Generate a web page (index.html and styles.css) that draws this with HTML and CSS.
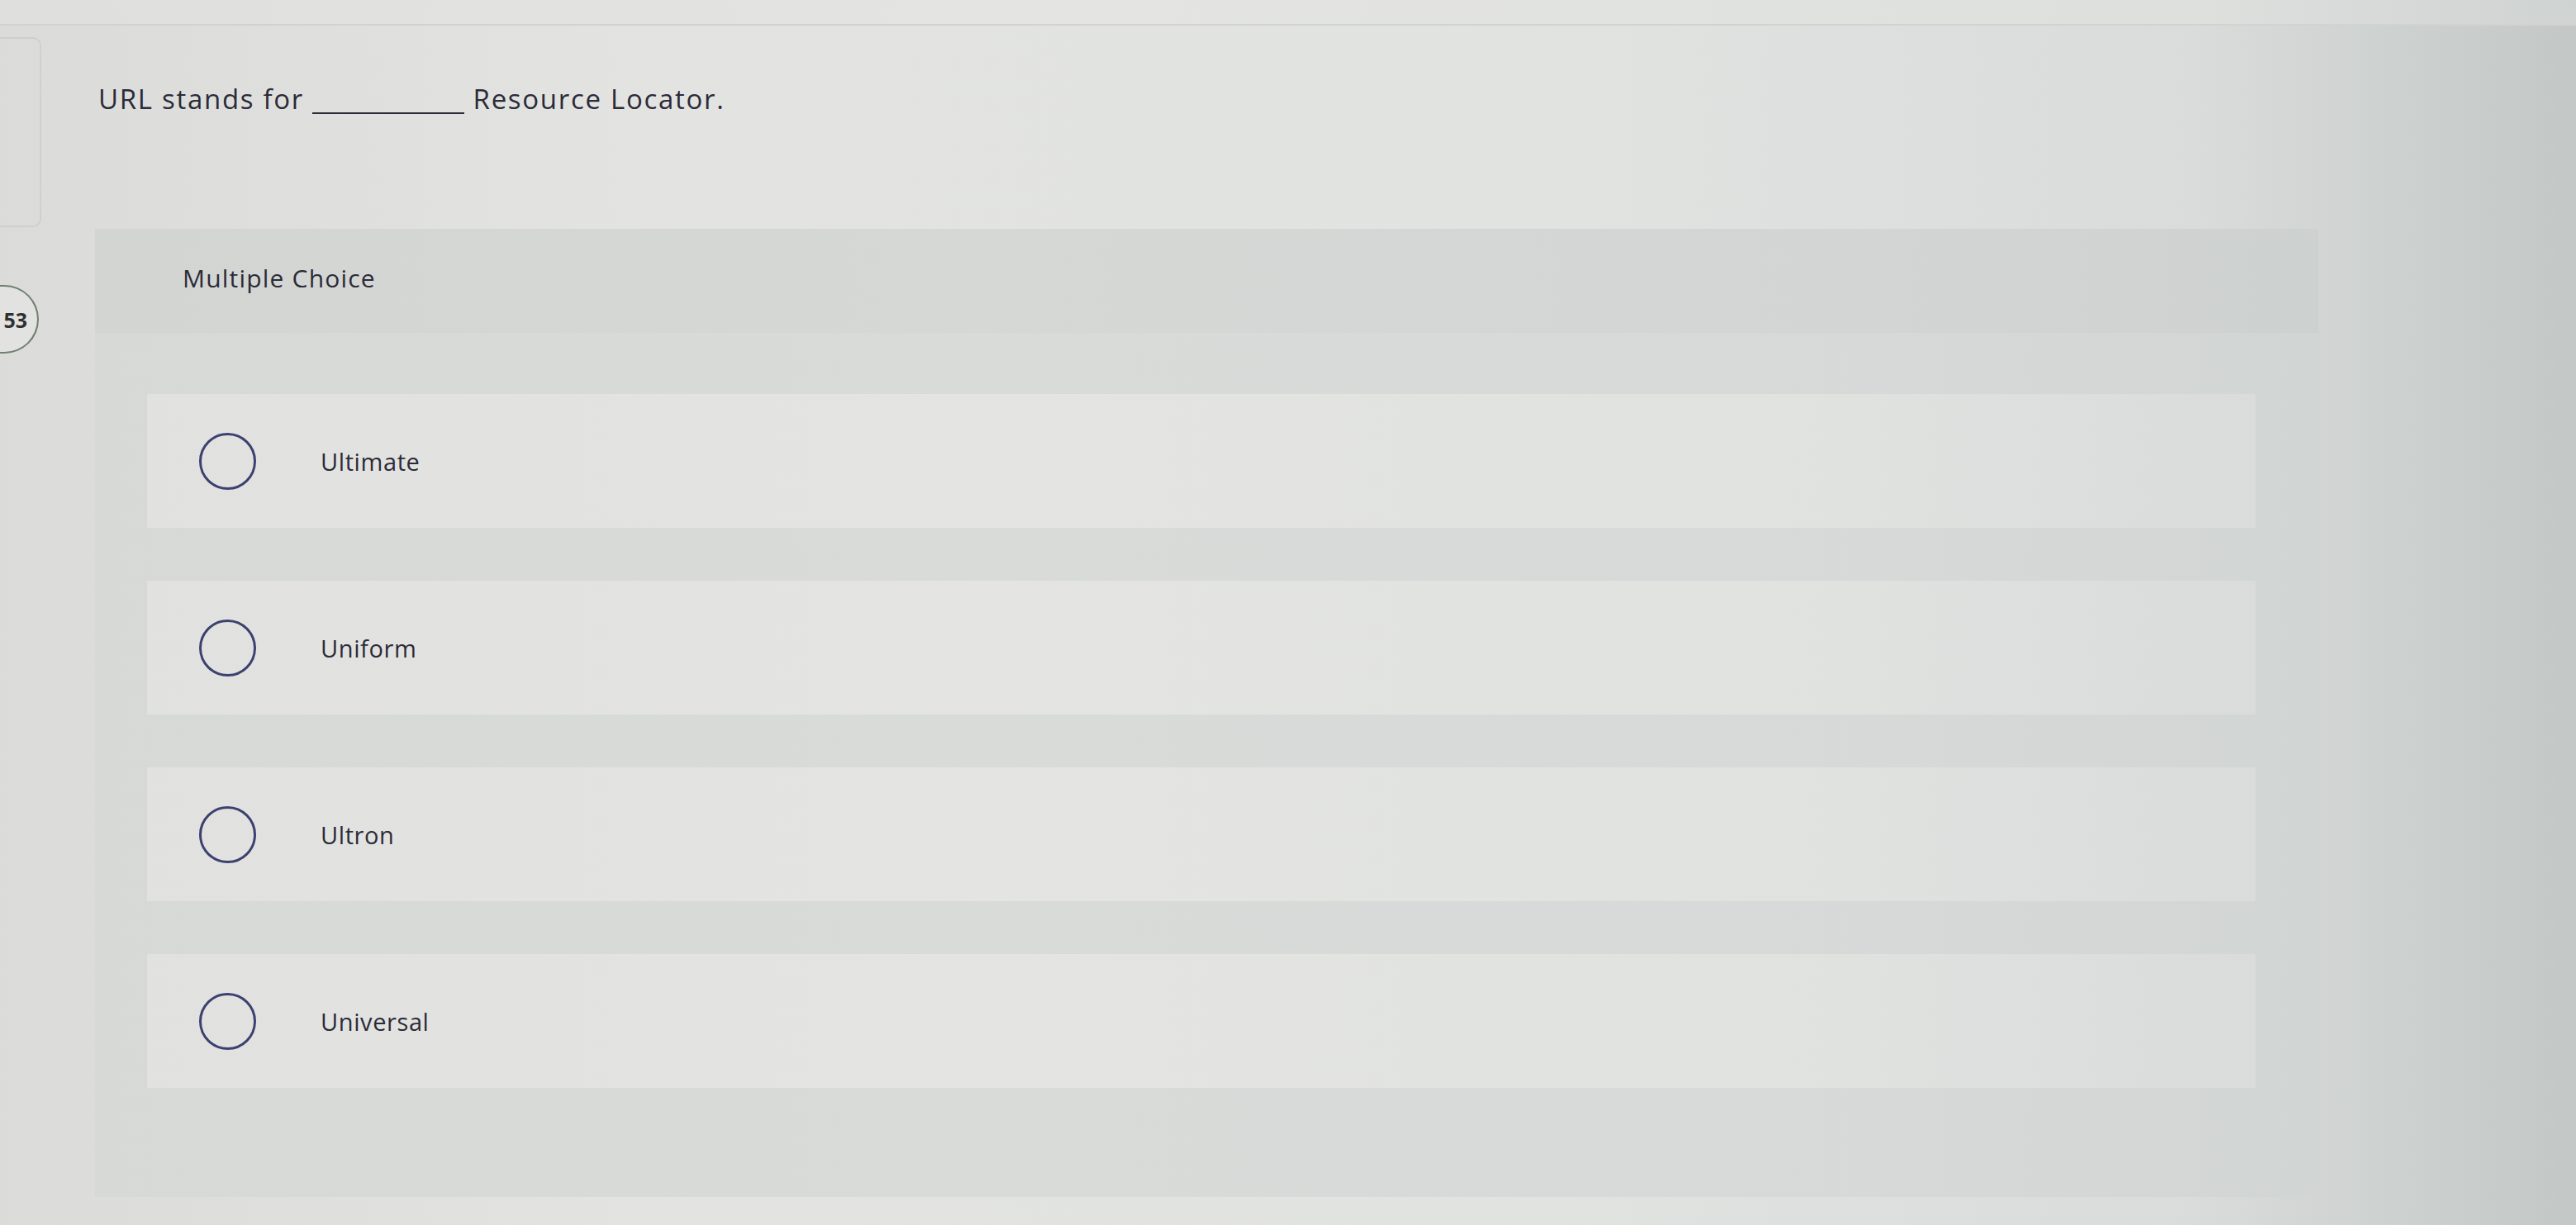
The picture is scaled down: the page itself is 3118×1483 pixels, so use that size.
FILE: index.html
```html
<!DOCTYPE html>
<html lang="en">
<head>
<meta charset="utf-8">
<title>URL question</title>
<link rel="stylesheet" href="styles.css">
</head>
<body>
<div class="topbar"></div>
<div class="main">
  <aside class="gutter">
    <div class="prev-card"></div>
    <div class="qnum">53</div>
  </aside>
  <section class="content">
    <p class="question">URL stands for <span class="blank"></span> Resource Locator.</p>
    <div class="panel">
      <div class="panel-head">Multiple Choice</div>
      <div class="options">
        <label class="option"><span class="radio"></span><span class="opt-text">Ultimate</span></label>
        <label class="option"><span class="radio"></span><span class="opt-text">Uniform</span></label>
        <label class="option"><span class="radio"></span><span class="opt-text">Ultron</span></label>
        <label class="option"><span class="radio"></span><span class="opt-text">Universal</span></label>
      </div>
    </div>
  </section>
</div>
</body>
</html>
```
FILE: styles.css
```css
html, body {
  margin: 0;
  padding: 0;
}
body {
  width: 3118px;
  height: 1483px;
  overflow: hidden;
  font-family: "Open Sans", "Liberation Sans", sans-serif;
  color: #2c2b38;
  background: linear-gradient(to right, #dbdcda 0%, #e3e4e2 25%, #e1e3e1 60%, #d9dcdb 85%, #cdd1d0 93%, #c3c7c6 100%);
}
.topbar {
  height: 29px;
  border-bottom: 2px solid #d2d3d1;
  background: linear-gradient(to right, #dfe0de 0%, #e4e5e3 40%, #dee0de 85%, #cfd3d2 100%);
}
.main {
  display: flex;
}
.gutter {
  width: 115px;
  flex: none;
  display: flex;
  flex-direction: column;
  padding-top: 14px;
}
.prev-card {
  width: 62px;
  height: 230px;
  margin-left: -12px;
  border: 2px solid #cfd0ce;
  border-radius: 0 10px 10px 0;
  box-sizing: border-box;
}
.qnum {
  margin-top: 70px;
  width: 47px;
  height: 83px;
  box-sizing: border-box;
  border: 2px solid #6f806f;
  border-left: none;
  border-radius: 0 42px 42px 0;
  display: flex;
  align-items: center;
  justify-content: flex-end;
  padding-right: 12px;
  font-size: 25px;
  font-weight: 700;
  color: #2f3130;
  background: #e2e3e1;
}
.content {
  flex: 1;
}
.question {
  margin: 0;
  padding: 68px 0 0 4px;
  font-size: 33px;
  line-height: 42px;
  letter-spacing: 1.7px;
}
.blank {
  display: inline-block;
  width: 184px;
  height: 1px;
  border-bottom: 2px solid #2c2b38;
  vertical-align: -6px;
}
.panel {
  margin-top: 136px;
  width: 2691px;
  height: 1172px;
  background: linear-gradient(to right, #d7d9d7 0%, #d9dbd9 40%, #d6d9d8 80%, #d1d5d4 100%);
}
.panel-head {
  height: 126px;
  display: flex;
  align-items: center;
  padding-left: 106px;
  padding-bottom: 8px;
  box-sizing: border-box;
  font-size: 30px;
  letter-spacing: 1.2px;
  background: linear-gradient(to right, #d3d5d3 0%, #d6d8d6 40%, #d2d5d4 80%, #cdd1d0 100%);
}
.options {
  display: flex;
  flex-direction: column;
  gap: 64px;
  padding: 74px 76px 0 63px;
}
.option {
  height: 162px;
  display: flex;
  align-items: center;
  padding-left: 63px;
  gap: 78px;
  background: linear-gradient(to right, #e1e2e0 0%, #e4e5e3 40%, #e0e2e0 80%, #d9dcdb 100%);
}
.radio {
  width: 69px;
  height: 69px;
  box-sizing: border-box;
  border: 3.5px solid #3d4170;
  border-radius: 50%;
  flex: none;
}
.opt-text {
  font-size: 29px;
  letter-spacing: 0.6px;
}
```
